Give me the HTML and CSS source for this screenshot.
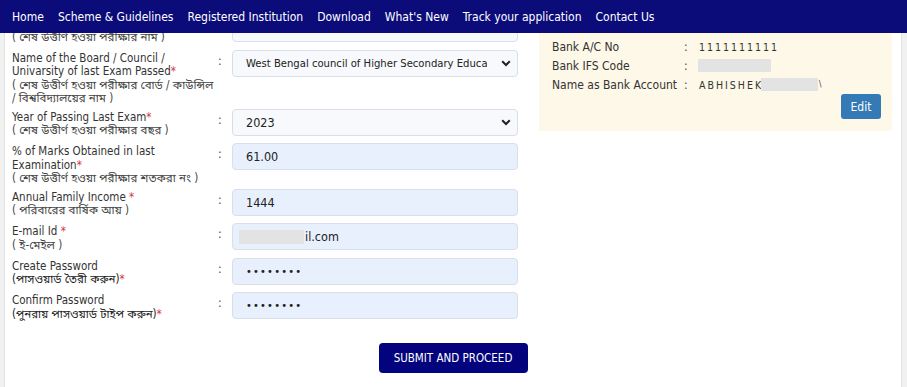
FILE: index.html
```html
<!DOCTYPE html>
<html lang="en">
<head>
    <meta charset="UTF-8">
    <meta name="viewport" content="width=device-width, initial-scale=1.0">
    <title>Student Registration</title>
    <link rel="stylesheet" href="styles.css">
</head>
<body>
    <nav class="topnav">
        <a href="#">Home</a>
        <a href="#">Scheme &amp; Guidelines</a>
        <a href="#">Registered Institution</a>
        <a href="#">Download</a>
        <a href="#">What's New</a>
        <a href="#">Track your application</a>
        <a href="#">Contact Us</a>
    </nav>

    <div class="page">
        <div class="content">
            <form class="reg-form">
                <div class="form-row">
                    <label class="field-label">
                        <span class="en">Name of last Exam Passed<span class="req">*</span></span>
                        <span class="bn">( শেষ উত্তীর্ণ হওয়া পরীক্ষার নাম )</span>
                    </label>
                    <span class="colon">:</span>
                    <input type="text" class="field" value="">
                </div>

                <div class="form-row">
                    <label class="field-label">
                        <span class="en">Name of the Board / Council / Univarsity of last Exam Passed<span class="req">*</span></span>
                        <span class="bn">( শেষ উত্তীর্ণ হওয়া পরীক্ষার বোর্ড / কাউন্সিল / বিশ্ববিদ্যালয়ের নাম )</span>
                    </label>
                    <span class="colon">:</span>
                    <div class="select-wrap">
                        <select class="field select long">
                            <option>West Bengal council of Higher Secondary Education</option>
                        </select>
                        <svg class="chevron" width="10" height="7" viewBox="0 0 10 7"><path d="M1.2 1.2 5 5 8.8 1.2" fill="none" stroke="#222" stroke-width="2"/></svg>
                    </div>
                </div>

                <div class="form-row">
                    <label class="field-label">
                        <span class="en">Year of Passing Last Exam<span class="req">*</span></span>
                        <span class="bn">( শেষ উত্তীর্ণ হওয়া পরীক্ষার বছর )</span>
                    </label>
                    <span class="colon">:</span>
                    <div class="select-wrap">
                        <select class="field select">
                            <option>2023</option>
                        </select>
                        <svg class="chevron" width="10" height="7" viewBox="0 0 10 7"><path d="M1.2 1.2 5 5 8.8 1.2" fill="none" stroke="#222" stroke-width="2"/></svg>
                    </div>
                </div>

                <div class="form-row">
                    <label class="field-label">
                        <span class="en">% of Marks Obtained in last Examination<span class="req">*</span></span>
                        <span class="bn">( শেষ উত্তীর্ণ হওয়া পরীক্ষার শতকরা নং )</span>
                    </label>
                    <span class="colon">:</span>
                    <input type="text" class="field filled" value="61.00">
                </div>

                <div class="form-row">
                    <label class="field-label">
                        <span class="en">Annual Family Income <span class="req">*</span></span>
                        <span class="bn">( পরিবারের বার্ষিক আয় )</span>
                    </label>
                    <span class="colon">:</span>
                    <input type="text" class="field filled" value="1444">
                </div>

                <div class="form-row">
                    <label class="field-label">
                        <span class="en">E-mail Id <span class="req">*</span></span>
                        <span class="bn">( ই-মেইল )</span>
                    </label>
                    <span class="colon">:</span>
                    <div class="field filled masked-field">
                        <span class="redact email-redact"></span><span>il.com</span>
                    </div>
                </div>

                <div class="form-row">
                    <label class="field-label">
                        <span class="en">Create Password</span>
                        <span class="bn bn-strong">(পাসওয়ার্ড তৈরী করুন)<span class="req">*</span></span>
                    </label>
                    <span class="colon">:</span>
                    <input type="password" class="field filled pass" value="password">
                </div>

                <div class="form-row">
                    <label class="field-label">
                        <span class="en">Confirm Password</span>
                        <span class="bn bn-strong">(পুনরায় পাসওয়ার্ড টাইপ করুন)<span class="req">*</span></span>
                    </label>
                    <span class="colon">:</span>
                    <input type="password" class="field filled pass" value="password">
                </div>
            </form>

            <aside class="bank-panel">
                <div class="bank-row">
                    <span class="bank-label">Bank A/C No</span>
                    <span class="bank-colon">:</span>
                    <span class="bank-value">1111111111</span>
                </div>
                <div class="bank-row">
                    <span class="bank-label">Bank IFS Code</span>
                    <span class="bank-colon">:</span>
                    <span class="bank-value"><span class="redact ifsc-redact"></span></span>
                </div>
                <div class="bank-row">
                    <span class="bank-label">Name as Bank Account</span>
                    <span class="bank-colon">:</span>
                    <span class="bank-value">ABHISHEK<span class="redact name-redact"></span><span class="tail">\</span></span>
                </div>
                <div class="bank-actions">
                    <button type="button" class="btn-edit">Edit</button>
                </div>
            </aside>
        </div>

        <div class="form-actions">
            <button type="submit" class="btn-submit">SUBMIT AND PROCEED</button>
        </div>
    </div>
</body>
</html>
```

FILE: styles.css
```css
body {
    margin: 0;
    padding: 0;
    background-color: #f1f1f1;
    font-family: "DejaVu Sans Condensed", "DejaVu Sans", "Noto Sans Bengali", sans-serif;
    font-stretch: condensed;
    color: #333;
}

.topnav {
    position: fixed;
    top: 0;
    left: 0;
    right: 0;
    z-index: 10;
    height: 33px;
    display: flex;
    align-items: center;
    gap: 14px;
    padding: 0 12px;
    background-color: #0b0b7a;
    box-sizing: border-box;
}

.topnav a {
    color: #ffffff;
    font-size: 12px;
    text-decoration: none;
}

.page {
    margin: 0 5px 0 4px;
    padding-top: 17px;
    min-height: 387px;
    box-sizing: border-box;
    background-color: #ffffff;
    border-left: 1px solid #e2e2e2;
    border-right: 1px solid #e2e2e2;
}

.content {
    display: flex;
    align-items: flex-start;
    gap: 8px;
}

.reg-form {
    width: 526px;
    padding-left: 7px;
    box-sizing: border-box;
}

.form-row {
    display: grid;
    grid-template-columns: 206px 14px 286px;
    align-items: start;
    min-height: 29.5px;
    margin-bottom: 5px;
}

.field-label {
    display: flex;
    flex-direction: column;
}

.field-label .en {
    font-size: 11.5px;
    line-height: 13.5px;
    color: #333;
    padding-right: 8px;
}

.field-label .bn {
    font-size: 11.5px;
    line-height: 13.5px;
    color: #444;
}

.field-label .bn-strong {
    color: #222;
}

.req {
    color: #d8343c;
}

.colon {
    font-size: 12px;
    line-height: 14px;
    padding-top: 2px;
    color: #444;
}

.field {
    width: 286px;
    height: 27px;
    margin-top: -2px;
    padding: 0 13px;
    box-sizing: border-box;
    border: 1px solid #d8dfea;
    border-radius: 4px;
    background-color: #f7f9fc;
    font-family: inherit;
    font-stretch: condensed;
    font-size: 12.5px;
    color: #222;
    outline: none;
}

.field.long {
    font-size: 11.2px;
}

.field.filled {
    background-color: #e8f0fe;
}

.field.pass {
    font-size: 11px;
    letter-spacing: 1.2px;
}

.select-wrap {
    position: relative;
    width: 286px;
}

.select {
    appearance: none;
    -webkit-appearance: none;
    padding-right: 30px;
}

.chevron {
    position: absolute;
    right: 7px;
    top: 8px;
}

.masked-field {
    display: flex;
    align-items: center;
    padding-left: 6px;
}

.redact {
    display: inline-block;
    background-color: #e3e3e3;
}

.email-redact {
    width: 65px;
    height: 14px;
    margin-right: 1px;
}

.bank-panel {
    width: 353px;
    margin-top: -17px;
    padding: 37px 11px 12px 13px;
    box-sizing: border-box;
    background-color: #fdf8e7;
}

.bank-row {
    display: grid;
    grid-template-columns: 132px 15px 1fr;
    align-items: center;
    height: 19px;
}

.bank-label {
    font-size: 12px;
    color: #333;
}

.bank-colon {
    font-size: 12px;
    color: #444;
}

.bank-value {
    display: flex;
    align-items: center;
    font-size: 10.5px;
    letter-spacing: 2px;
    color: #333;
}

.ifsc-redact {
    width: 73px;
    height: 13px;
    margin-left: -1px;
}

.name-redact {
    width: 57px;
    height: 13px;
    margin-left: -2px;
}

.tail {
    font-size: 8px;
    margin-left: 1px;
}

.bank-actions {
    display: flex;
    justify-content: flex-end;
    margin-top: 0;
}

.btn-edit {
    width: 40px;
    height: 25px;
    padding: 0;
    border: none;
    border-radius: 3px;
    background-color: #337ab7;
    color: #ffffff;
    font-family: inherit;
    font-stretch: condensed;
    font-size: 12px;
    cursor: pointer;
}

.form-actions {
    display: flex;
    justify-content: center;
    padding: 14px 0 14px;
}

.btn-submit {
    width: 149px;
    height: 30px;
    border: none;
    border-radius: 4px;
    background-color: #03037d;
    color: #ffffff;
    font-family: inherit;
    font-stretch: condensed;
    font-size: 11.5px;
    font-weight: normal;
    cursor: pointer;
}
```
